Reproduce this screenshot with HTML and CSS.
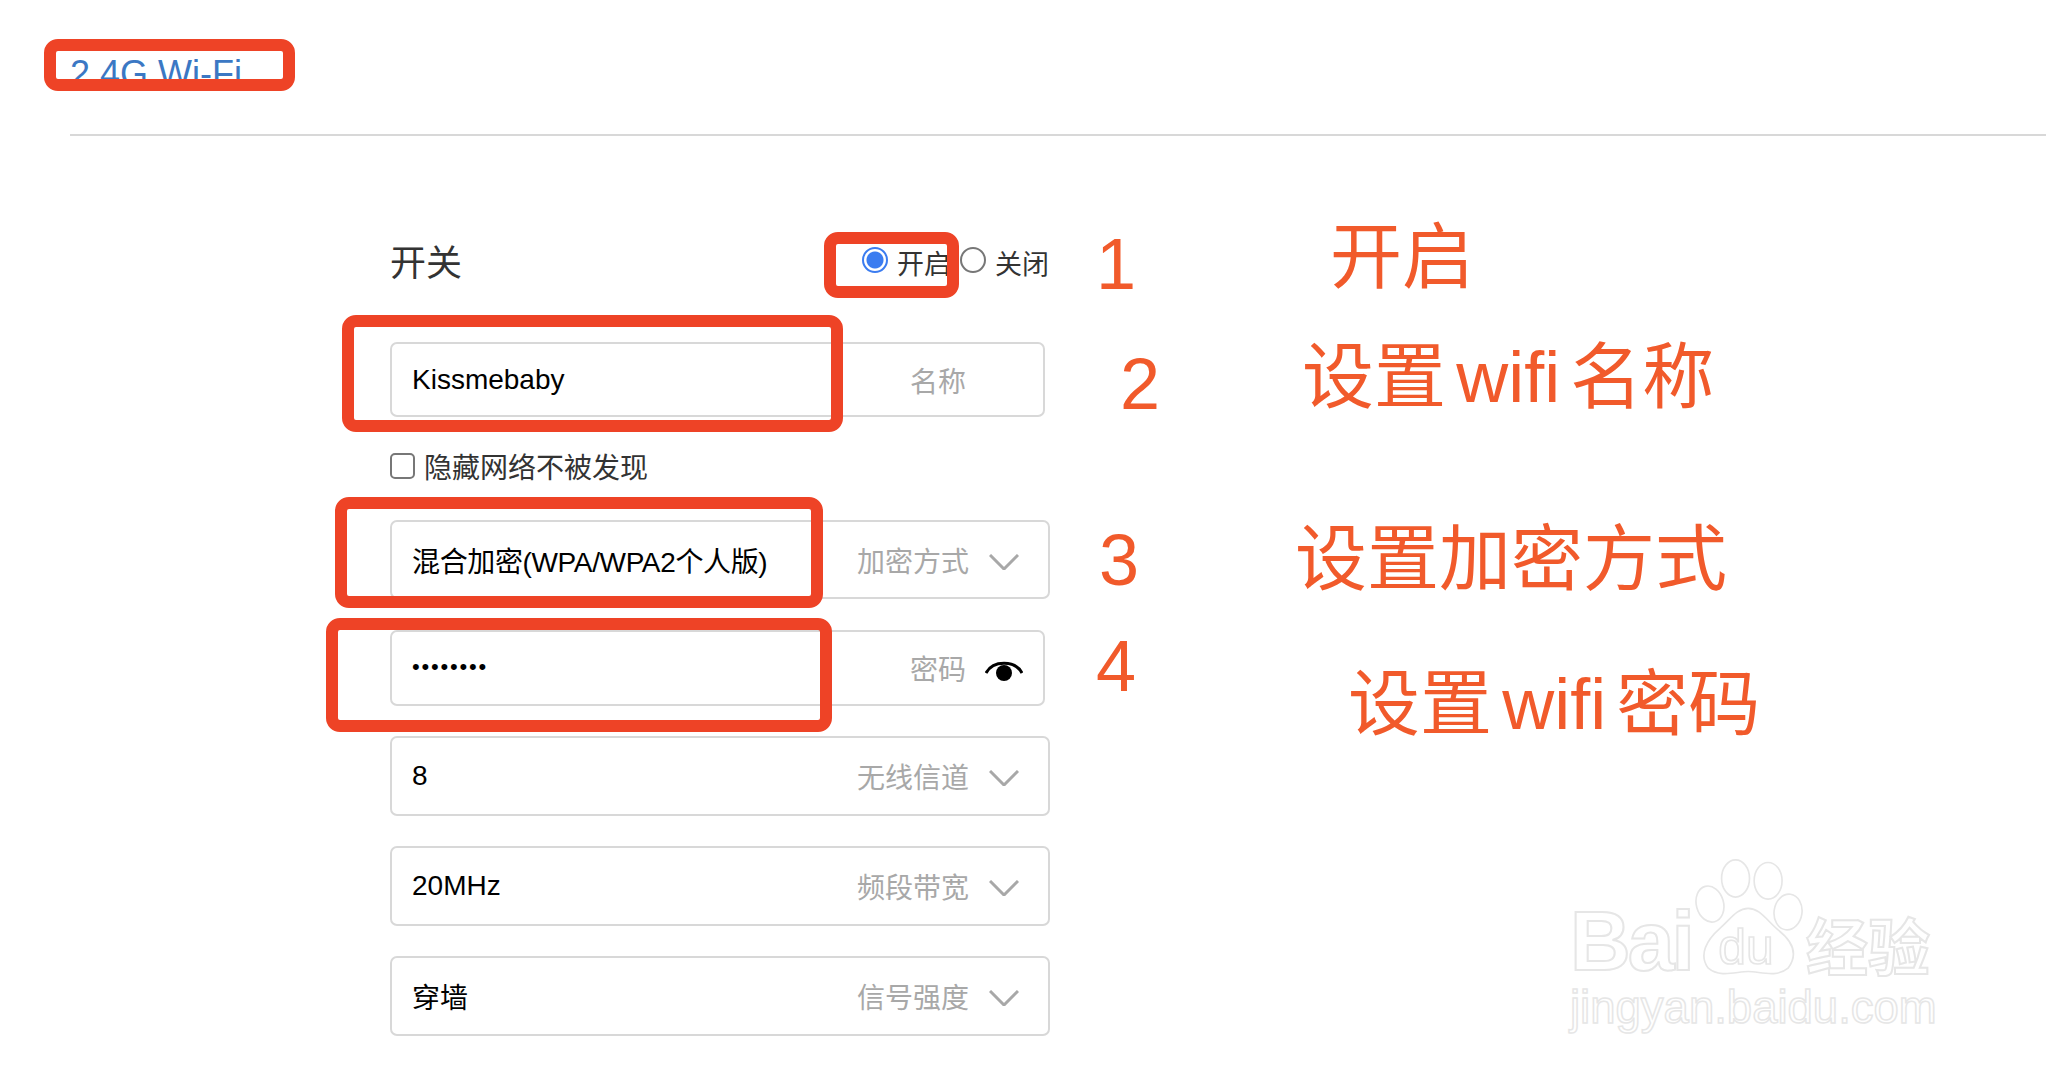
FILE: index.html
```html
<!DOCTYPE html>
<html lang="zh-CN">
  <head>
    <meta charset="UTF-8" />
    <title>2.4G Wi-Fi</title>
    <link rel="stylesheet" href="styles.css">
  </head>
  <body>
    <h2 class="tab">2.4G Wi-Fi</h2>
    <div class="line"></div>

    <div class="form">
      <div class="switch-row">
        <span class="switch-label">开关</span>
        <div class="radios">
          <label class="radio"><input type="radio" name="wifi" checked />开启</label>
          <label class="radio"><input type="radio" name="wifi" />关闭</label>
        </div>
      </div>

      <div class="field short first">
        <span class="value">Kissmebaby</span>
        <span class="hint">名称</span>
      </div>

      <label class="hide-row"><input type="checkbox" />隐藏网络不被发现</label>

      <div class="field wide encrypt">
        <span class="value tight">混合加密(WPA/WPA2个人版)</span>
        <span class="hint">加密方式</span>
        <svg class="chevron" viewBox="0 0 30 16"><path d="M1 1 L15 15 L29 1" /></svg>
      </div>

      <div class="field short password">
        <span class="value dots">••••••••</span>
        <span class="hint">密码</span>
        <svg class="eye" viewBox="0 0 38 23"><path d="M1 14 C8 1 30 1 37 14" /><circle cx="19" cy="14" r="8" /></svg>
      </div>

      <div class="field wide channel">
        <span class="value">8</span>
        <span class="hint">无线信道</span>
        <svg class="chevron" viewBox="0 0 30 16"><path d="M1 1 L15 15 L29 1" /></svg>
      </div>

      <div class="field wide band">
        <span class="value">20MHz</span>
        <span class="hint">频段带宽</span>
        <svg class="chevron" viewBox="0 0 30 16"><path d="M1 1 L15 15 L29 1" /></svg>
      </div>

      <div class="field wide band">
        <span class="value">穿墙</span>
        <span class="hint">信号强度</span>
        <svg class="chevron" viewBox="0 0 30 16"><path d="M1 1 L15 15 L29 1" /></svg>
      </div>
    </div>

    <!-- red marks drawn on top of the screenshot -->
    <div class="mark mark-tab"></div>
    <div class="mark mark-switch"></div>
    <div class="mark mark-name"></div>
    <div class="mark mark-encrypt"></div>
    <div class="mark mark-password"></div>

    <span class="num num1">1</span>
    <span class="num num2">2</span>
    <span class="num num3">3</span>
    <span class="num num4">4</span>

    <span class="note note1">开启</span>
    <span class="note note2">设置 <span class="latin">wifi</span> 名称</span>
    <span class="note note3">设置加密方式</span>
    <span class="note note4">设置 <span class="latin">wifi</span> 密码</span>

    <div class="watermark">
      <div class="wm-top">
        <span class="wm-bai">Bai</span>
        <svg class="wm-paw" viewBox="465 58 325 352">
          <ellipse cx="510" cy="192" rx="41" ry="55" transform="rotate(-15 510 192)" />
          <ellipse cx="587" cy="115" rx="42" ry="56" />
          <ellipse cx="685" cy="122" rx="42" ry="55" />
          <ellipse cx="745" cy="216" rx="42" ry="54" transform="rotate(8 745 216)" />
          <path d="M625 205 C660 205 680 240 715 270 C760 305 775 345 745 385 C710 415 660 395 625 395 C590 395 540 415 505 385 C475 345 500 300 540 265 C570 240 590 205 625 205 Z" />
          <text x="535" y="372" class="wm-du">du</text>
        </svg>
        <span class="wm-cn">经验</span>
      </div>
      <div class="wm-url">jingyan.baidu.com</div>
    </div>
  </body>
</html>
```

FILE: styles.css
```css
body {
  margin: 0;
  height: 1078px;
  overflow: hidden;
  position: relative;
  background-color: #fff;
  font-family: "Liberation Sans", "Noto Sans CJK SC", sans-serif;
}
.tab {
  margin: 0;
  padding: 54px 0 0 70px;
  height: 134px;
  box-sizing: border-box;
  font-size: 36px;
  line-height: 40px;
  font-weight: normal;
  color: #3b78c4;
}
.line {
  margin-left: 70px;
  height: 2px;
  background-color: #d8d8d8;
}

.form {
  width: 660px;
  margin-left: 390px;
  font-size: 28px;
  color: #000;
}
.switch-row {
  display: flex;
  justify-content: space-between;
  align-items: center;
  margin-top: 108px;
  height: 36px;
}
.switch-label {
  font-size: 36px;
  color: #333;
  margin-bottom: 4px;
}
.radios {
  display: flex;
  margin-right: 1px;
}
.radio {
  display: flex;
  align-items: center;
  font-size: 27px;
  color: #333;
  height: 36px;
}
input[type="radio"] {
  appearance: none;
  width: 26px;
  height: 26px;
  margin: -5px 9px 0 0;
  border: 2px solid #777;
  border-radius: 50%;
  background-color: #fff;
  box-sizing: border-box;
}
input[type="radio"]:checked {
  border-color: #3b7cf0;
  background: radial-gradient(circle, #3b7cf0 0 8px, #fff 9px);
}
.radio + .radio {
  margin-left: 9px;
}
.field {
  display: flex;
  align-items: center;
  box-sizing: border-box;
  padding-left: 20px;
  border: 2px solid #d8d8d8;
  border-radius: 7px;
}
.short {
  width: 655px;
  height: 75px;
  padding-right: 77px;
}
.wide {
  width: 660px;
  height: 80px;
  padding-right: 29px;
}
.first {
  margin-top: 62px;
}
.hide-row {
  display: flex;
  align-items: center;
  height: 28px;
  margin-top: 35px;
  color: #333;
}
input[type="checkbox"] {
  appearance: none;
  width: 25px;
  height: 26px;
  margin: 0 9px 0 0;
  border: 2px solid #777;
  border-radius: 5px;
  background-color: #fff;
  box-sizing: border-box;
}
.encrypt {
  margin-top: 40px;
  height: 79px;
}
.password {
  margin-top: 31px;
  height: 76px;
  padding-right: 20px;
}
.channel {
  margin-top: 30px;
}
.band {
  margin-top: 30px;
}
.value {
  flex: 1;
  white-space: nowrap;
}
.tight {
  letter-spacing: -0.36px;
}
.dots {
  position: relative;
  top: -1px;
  font-size: 22px;
  letter-spacing: 1.8px;
}
.hint {
  color: #a8a8a8;
}
.chevron {
  width: 30px;
  height: 16px;
  margin-left: 20px;
  margin-top: 4px;
  fill: none;
  stroke: #a8a8a8;
  stroke-width: 3;
}
.eye {
  width: 38px;
  height: 23px;
  margin-left: 19px;
  margin-top: 4px;
  fill: #000;
}
.eye path {
  fill: none;
  stroke: #000;
  stroke-width: 3;
}

.mark {
  position: absolute;
  box-sizing: border-box;
  border: 12px solid #ee4326;
  border-radius: 14px;
}
.mark-tab {
  left: 44px;
  top: 39px;
  width: 251px;
  height: 52px;
}
.mark-switch {
  left: 824px;
  top: 232px;
  width: 135px;
  height: 66px;
}
.mark-name {
  left: 342px;
  top: 315px;
  width: 501px;
  height: 117px;
}
.mark-encrypt {
  left: 335px;
  top: 497px;
  width: 488px;
  height: 111px;
}
.mark-password {
  left: 326px;
  top: 618px;
  width: 506px;
  height: 114px;
}

.num,
.note {
  position: absolute;
  color: #f15a2b;
  white-space: nowrap;
  line-height: 1;
}
.num {
  font-size: 72px;
}
.num1 { left: 1096px; top: 228px; }
.num2 { left: 1120px; top: 348px; }
.num3 { left: 1099px; top: 524px; }
.num4 { left: 1096px; top: 630px; }
.note {
  font-size: 72px;
  font-family: "Noto Sans CJK SC", "Liberation Sans", sans-serif;
  word-spacing: -6px;
}
.latin {
  font-family: "Liberation Sans", sans-serif;
}
.note1 { left: 1330px; top: 215px; }
.note2 { left: 1302px; top: 335px; }
.note3 { left: 1295px; top: 517px; }
.note4 { left: 1348px; top: 662px; }

.watermark {
  position: absolute;
  left: 1570px;
  top: 859px;
  color: #fff;
  -webkit-text-stroke: 2px #e6e6e6;
}
.wm-top {
  display: flex;
  align-items: flex-end;
}
.wm-bai {
  font-size: 84px;
  font-weight: bold;
  line-height: 72px;
  letter-spacing: -3px;
  width: 125px;
}
.wm-paw {
  width: 108px;
  height: 118px;
  fill: #fff;
  stroke: #e6e6e6;
  stroke-width: 5;
}
.wm-du {
  font-size: 150px;
  font-family: "Liberation Sans", sans-serif;
  stroke-width: 5;
  -webkit-text-stroke: 0;
}
.wm-cn {
  font-size: 62px;
  line-height: 66px;
  margin-left: 3px;
  font-weight: bold;
  font-family: "Noto Sans CJK SC", sans-serif;
}
.wm-url {
  font-size: 45.5px;
  line-height: 50px;
  margin-top: 6px;
  -webkit-text-stroke: 1.5px #e6e6e6;
}
```
